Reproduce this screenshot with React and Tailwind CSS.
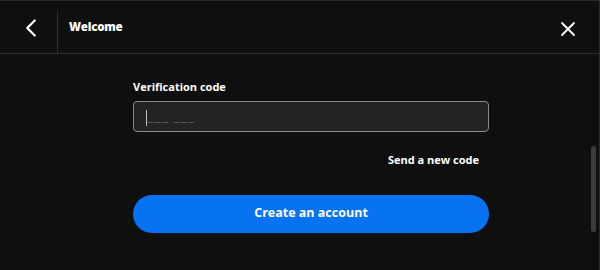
import { ChevronLeft, X } from "lucide-react";

export default function App() {
  return (
    <div
      className="w-[600px] h-[270px] bg-[#0f0f0f] text-white flex flex-col overflow-hidden border-t border-r border-[#2c2c2c] relative"
      style={{ fontFamily: "'Open Sans', 'Noto Sans', sans-serif" }}
    >
      {/* header */}
      <div className="h-[53px] flex items-center border-b border-[#2e2e2e] shrink-0">
        <div className="w-[57px] h-full flex items-center justify-center">
          <ChevronLeft className="w-[30px] h-[30px] ml-[5px] mt-[2px]" strokeWidth={1.8} />
        </div>
        <div className="w-px h-[42px] mt-[10px] bg-[#303030]" />
        <span className="ml-[11px] text-[11.5px] font-extrabold tracking-[-0.2px]">Welcome</span>
        <div className="flex-1" />
        <X className="w-[24px] h-[24px] mr-[19px] mt-[3px]" strokeWidth={1.8} />
      </div>

      {/* body */}
      <div className="flex-1 flex justify-center">
        <div className="w-[356px] flex flex-col pt-[25px] ml-[23px]">
          <label className="text-[11px] font-bold leading-[16px]">Verification code</label>
          <div className="mt-[6px] h-[31px] rounded-[4px] border border-[#8a8a8a] bg-[#232323] flex items-center px-[12px]">
            <span className="w-px h-[16px] bg-[#bdbdbd] mt-[2px]" />
            <span className="text-[#555555] text-[12px] tracking-[0.5px] mt-[12px] leading-none whitespace-pre">{"‒‒‒ ‒‒‒"}</span>
          </div>
          <div className="flex justify-end mt-[20px] pr-[10px]">
            <span className="text-[11px] font-bold">Send a new code</span>
          </div>
          <button className="mt-[26px] h-[38px] rounded-full bg-[#0873f0] text-[12.5px] font-bold text-white">
            Create an account
          </button>
        </div>
      </div>

      {/* scrollbar */}
      <div className="absolute right-[3px] top-[145px] w-[5px] h-[86px] rounded-full bg-[#3b3b3b]" />
    </div>
  );
}
